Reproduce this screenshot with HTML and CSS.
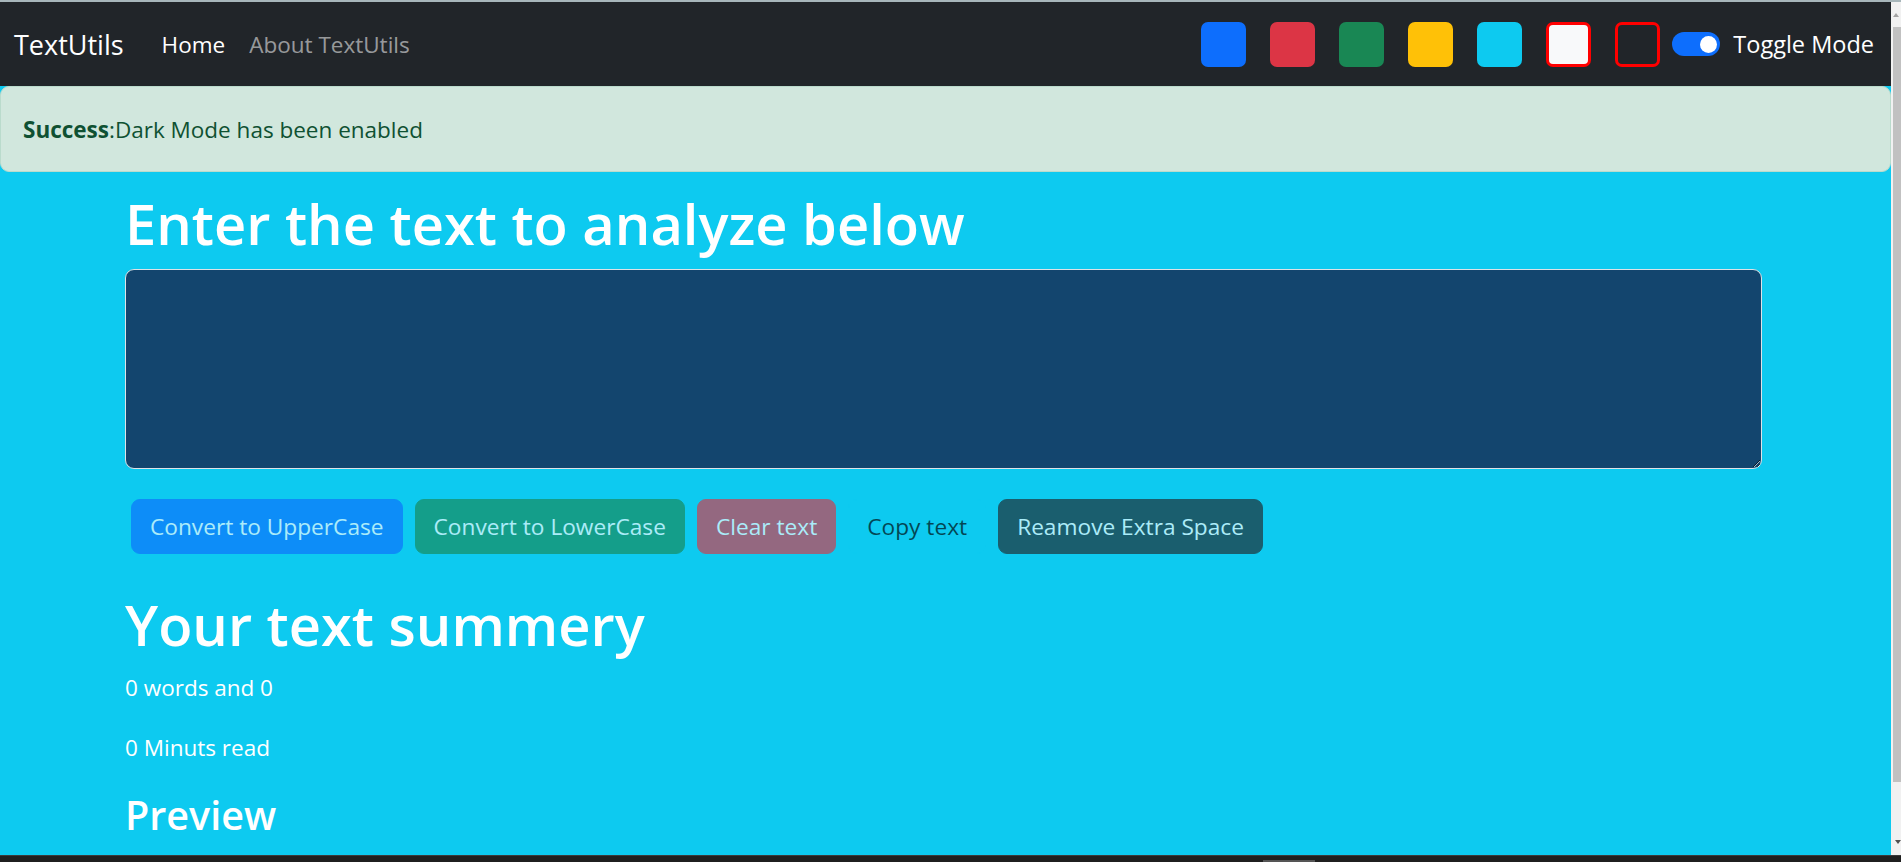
FILE: index.html
```html
<!DOCTYPE html>
<html lang="en">
<head>
<meta charset="utf-8">
<title>TextUtils</title>
<link rel="stylesheet" href="styles.css">
</head>
<body>
<div class="topline"></div>
<div class="frame">
  <div class="page">
    <nav class="navbar">
      <a class="brand">TextUtils</a>
      <ul class="nav">
        <li><a class="nav-link active">Home</a></li>
        <li><a class="nav-link">About TextUtils</a></li>
      </ul>
      <div class="nav-right">
        <div class="swatches">
          <span class="swatch sw-primary"></span>
          <span class="swatch sw-danger"></span>
          <span class="swatch sw-success"></span>
          <span class="swatch sw-warning"></span>
          <span class="swatch sw-info"></span>
          <span class="swatch sw-light"></span>
          <span class="swatch sw-dark"></span>
        </div>
        <label class="switch">
          <span class="switch-track"><span class="switch-knob"></span></span>
          <span class="switch-label">Toggle Mode</span>
        </label>
      </div>
    </nav>
    <div class="alert"><strong>Success</strong>:Dark Mode has been enabled</div>
    <main class="container analyze">
      <h1>Enter the text to analyze below</h1>
      <textarea class="form-control" rows="5"></textarea>
      <div class="btn-row">
        <button class="btn btn-primary" disabled>Convert to UpperCase</button>
        <button class="btn btn-success" disabled>Convert to LowerCase</button>
        <button class="btn btn-danger" disabled>Clear text</button>
        <button class="btn btn-info" disabled>Copy text</button>
        <button class="btn btn-dark" disabled>Reamove Extra Space</button>
      </div>
    </main>
    <section class="container summary">
      <h1>Your text summery</h1>
      <p>0 words and 0</p>
      <p>0 Minuts read</p>
      <h3>Preview</h3>
    </section>
  </div>
  <div class="scrollbar">
    <div class="sb-btn"><span class="arrow-up"></span></div>
    <div class="sb-thumb"></div>
    <div class="sb-rest"><span class="arrow-down"></span></div>
  </div>
</div>
<div class="taskbar"><span class="taskbar-mark"></span></div>
</body>
</html>
```

FILE: styles.css
```css
* { box-sizing: border-box; }

html, body {
  margin: 0;
  padding: 0;
}

body {
  height: 862px;
  overflow: hidden;
  display: flex;
  flex-direction: column;
  font-family: "Open Sans", "Liberation Sans", sans-serif;
  background: #1f1f1f;
}

.topline {
  flex: none;
  height: 2px;
  background: #a7b6ba;
}

.frame {
  flex: 1;
  min-height: 0;
  display: flex;
}

.page {
  flex: 1;
  min-width: 0;
  background: #0dcaf0;
  color: #fff;
  overflow: hidden;
}

/* navbar */
.navbar {
  height: 84px;
  background: #212529;
  display: flex;
  align-items: center;
  padding: 0 17px 0 14px;
}

.brand {
  font-size: 27px;
  color: #fff;
  margin-right: 26px;
  line-height: 1;
}

.nav {
  list-style: none;
  margin: 0;
  padding: 0;
  display: flex;
}

.nav-link {
  display: block;
  padding: 0 12px;
  font-size: 22.5px;
  color: rgba(255, 255, 255, 0.55);
}

.nav-link.active { color: #fff; }

.nav-right {
  margin-left: auto;
  display: flex;
  align-items: center;
}

.swatches {
  display: flex;
  gap: 24px;
  margin-right: 12px;
}

.swatch {
  width: 45px;
  height: 45px;
  border-radius: 7px;
}

.sw-primary { background: #0d6efd; }
.sw-danger { background: #dc3545; }
.sw-success { background: #198754; }
.sw-warning { background: #ffc107; }
.sw-info { background: #0dcaf0; }
.sw-light { background: #f8f9fa; border: 3px solid #ff0000; }
.sw-dark { background: #212529; border: 3px solid #ff0000; }

.switch {
  display: flex;
  align-items: center;
  gap: 13px;
}

.switch-track {
  width: 48px;
  height: 24px;
  border-radius: 12px;
  background: #0d6efd;
  display: flex;
  align-items: center;
  justify-content: flex-end;
  padding-right: 3.5px;
}

.switch-knob {
  width: 17px;
  height: 17px;
  border-radius: 50%;
  background: #fff;
}

.switch-label {
  font-size: 23.5px;
  color: #fff;
}

/* alert */
.alert {
  height: 86px;
  background: #d1e7dd;
  border: 1.5px solid #badbcc;
  border-radius: 9px;
  padding: 0 22px;
  display: flex;
  align-items: center;
  font-size: 22.5px;
  color: #0f5132;
}

.alert strong { font-weight: 700; }

/* content */
.container {
  margin-left: 125px;
  margin-right: 129px;
}

.analyze { padding-top: 15px; }

h1 {
  font-size: 56px;
  font-weight: 600;
  line-height: 72px;
  margin: 0 0 10px;
}

.form-control {
  display: block;
  width: 100%;
  height: 200px;
  background: #13456e;
  border: 1.5px solid #dee2e6;
  border-radius: 9px;
  color: #fff;
  resize: vertical;
}

.btn-row {
  display: flex;
  gap: 12px;
  padding: 30px 6px 0;
}

.btn {
  font-family: inherit;
  font-size: 22.7px;
  line-height: 36px;
  padding: 8.5px 18px;
  border: 1.5px solid transparent;
  border-radius: 9px;
  color: #fff;
  opacity: 0.65;
}

.btn-primary { background: #0d6efd; border-color: #0d6efd; }
.btn-success { background: #198754; border-color: #198754; }
.btn-danger { background: #dc3545; border-color: #dc3545; }
.btn-info { background: #0dcaf0; border-color: #0dcaf0; color: #000; }
.btn-dark { background: #212529; border-color: #212529; }

.summary { padding-top: 34px; }

.summary h1 { margin-bottom: 10px; }

.summary p {
  font-size: 22.5px;
  line-height: 36px;
  margin: 0 0 24px;
}

.summary h3 {
  font-size: 39.5px;
  font-weight: 600;
  line-height: 50px;
  margin: 0;
}

/* fake browser scrollbar */
.scrollbar {
  flex: none;
  width: 10px;
  background: #f1f1f1;
  display: flex;
  flex-direction: column;
}

.sb-btn {
  height: 25px;
  display: flex;
  align-items: center;
  justify-content: center;
}

.arrow-up {
  width: 0;
  height: 0;
  border-left: 3px solid transparent;
  border-right: 3px solid transparent;
  border-bottom: 4px solid #a3a3a3;
}

.sb-thumb {
  height: 755px;
  margin-left: 2px;
  background: #c1c1c1;
}

.sb-rest {
  flex: 1;
  display: flex;
  align-items: flex-end;
  justify-content: flex-end;
  padding-bottom: 11px;
}

.arrow-down {
  width: 0;
  height: 0;
  border-left: 3px solid transparent;
  border-right: 3px solid transparent;
  border-top: 4px solid #505050;
}

.taskbar {
  flex: none;
  height: 7px;
  background: #1f1f1f;
  border-top: 1px solid #3a3a3a;
  display: flex;
  align-items: flex-end;
  padding-left: 1263px;
}

.taskbar-mark {
  width: 52px;
  height: 2px;
  background: #555;
}
```
